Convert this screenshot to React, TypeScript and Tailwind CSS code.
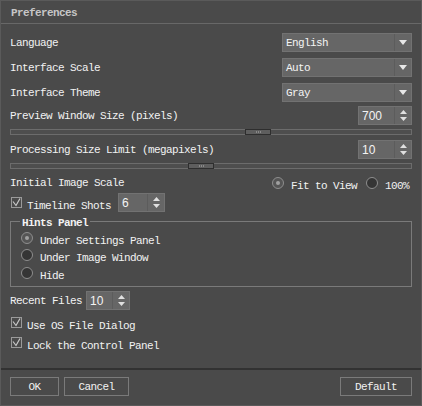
import React from "react";

const F = "font-['Liberation_Mono',monospace] text-[11px] leading-[14px] tracking-[-0.6px]";

function DownTri() {
  return (
    <svg width="8" height="5" viewBox="0 0 8 5">
      <path d="M0 0 L8 0 L4 5 Z" fill="#e8e8e8" />
    </svg>
  );
}

function Dropdown({ value }: { value: string }) {
  return (
    <div className="flex h-[19px] w-[130px] bg-[#666666] border border-[#727272]">
      <div className={`flex-1 flex items-center pl-[3px] text-[#f4f4f4] ${F}`}>{value}</div>
      <div className="w-[17px] border-l border-[#5c5c5c] flex items-center justify-center">
        <DownTri />
      </div>
    </div>
  );
}

function SpinArrows() {
  return (
    <svg width="7" height="11" viewBox="0 0 7 11">
      <path d="M0 4 L7 4 L3.5 0 Z" fill="#e0e0e0" />
      <path d="M0 7 L7 7 L3.5 11 Z" fill="#e0e0e0" />
    </svg>
  );
}

function Spin({ value, w }: { value: string; w: number }) {
  return (
    <div className="flex h-[19px] bg-[#666666] border border-[#727272]" style={{ width: w }}>
      <div className="flex-1 flex items-center pl-[3px] text-[#f4f4f4] font-['Liberation_Sans',sans-serif] text-[12px]">
        {value}
      </div>
      <div className="w-[17px] border-l border-[#5c5c5c] flex items-center justify-center">
        <SpinArrows />
      </div>
    </div>
  );
}

function Slider({ pos }: { pos: number }) {
  return (
    <div className="relative h-[6px] border border-[#6c6c6c] bg-[#4e4e4e]">
      <div
        className="absolute top-[-1px] h-[6px] w-[26px] border border-[#2e2e2e] bg-[#5e5e5e] flex items-center justify-center gap-[1px]"
        style={{ left: pos }}
      >
        <div className="w-px h-[2px] bg-[#8a8a8a]" />
        <div className="w-px h-[2px] bg-[#8a8a8a]" />
        <div className="w-px h-[2px] bg-[#8a8a8a]" />
      </div>
    </div>
  );
}

function Radio({ checked }: { checked?: boolean }) {
  return (
    <div
      className={`w-[12px] h-[12px] shrink-0 rounded-full border border-[#8e8e8e] flex items-center justify-center ${
        checked ? "bg-[#555555]" : "bg-[#353535]"
      }`}
    >
      {checked && <div className="w-[4px] h-[4px] rounded-full bg-[#a0a0a0]" />}
    </div>
  );
}

function Check() {
  return (
    <div className="w-[11px] h-[11px] shrink-0 border border-[#9a9a9a] flex items-center justify-center">
      <svg width="9" height="9" viewBox="0 0 9 9">
        <path d="M1 3.5 L4 7.5 L8 0.5" stroke="#c8c8c8" strokeWidth="1.2" fill="none" />
      </svg>
    </div>
  );
}

function Label({ children, bold }: { children: React.ReactNode; bold?: boolean }) {
  return <span className={`text-[#f2f2f2] ${F} ${bold ? "font-bold" : ""}`}>{children}</span>;
}

export default function App() {
  return (
    <div className="w-[422px] h-[406px] bg-[#4a4a4a] border border-[#5a5a5a] flex flex-col overflow-hidden">
      <div className="h-[23px] pt-[2px] flex items-center pl-[10px] border-b border-[#686868]">
        <span className={`text-[#c6c6c6] font-bold ${F}`}>Preferences</span>
      </div>
      <div className="flex flex-col px-[9px]">
        <div className="mt-[9px] h-[19px] flex items-center justify-between">
          <Label>Language</Label>
          <Dropdown value="English" />
        </div>
        <div className="mt-[6px] h-[19px] flex items-center justify-between">
          <Label>Interface Scale</Label>
          <Dropdown value="Auto" />
        </div>
        <div className="mt-[6px] h-[19px] flex items-center justify-between">
          <Label>Interface Theme</Label>
          <Dropdown value="Gray" />
        </div>
        <div className="mt-[4px] h-[19px] flex items-center justify-between">
          <Label>Preview Window Size (pixels)</Label>
          <Spin value="700" w={54} />
        </div>
        <div className="mt-[4px]">
          <Slider pos={234} />
        </div>
        <div className="mt-[5px] h-[19px] flex items-center justify-between">
          <Label>Processing Size Limit (megapixels)</Label>
          <Spin value="10" w={54} />
        </div>
        <div className="mt-[4px]">
          <Slider pos={177} />
        </div>
        <div className="mt-[5px] h-[18px] flex items-center justify-between">
          <Label>Initial Image Scale</Label>
          <div className="flex items-center pr-[3px]">
            <Radio checked />
            <span className="ml-[7px]">
              <Label>Fit to View</Label>
            </span>
            <span className="ml-[9px]">
              <Radio />
            </span>
            <span className="ml-[7px]">
              <Label>100%</Label>
            </span>
          </div>
        </div>
        <div className="mt-[1px] h-[19px] flex items-center">
          <div className="ml-[1px]">
            <Check />
          </div>
          <span className="ml-[5px]">
            <Label>Timeline Shots</Label>
          </span>
          <div className="ml-[7px]">
            <Spin value="6" w={47} />
          </div>
        </div>
        <div className="relative mt-[9px] h-[66px] border border-[#7a7a7a] pt-[7px] pl-[10px] flex flex-col">
          <div className="absolute left-[9px] top-[-6px] px-[2px] bg-[#4a4a4a] flex">
            <Label bold>Hints Panel</Label>
          </div>
          {["Under Settings Panel", "Under Image Window", "Hide"].map((t, i) => (
            <div key={t} className="h-[17.5px] flex items-center">
              <Radio checked={i === 0} />
              <span className="ml-[7px]">
                <Label>{t}</Label>
              </span>
            </div>
          ))}
        </div>
        <div className="mt-[4px] h-[19px] flex items-center">
          <Label>Recent Files</Label>
          <div className="ml-[4px]">
            <Spin value="10" w={44} />
          </div>
        </div>
        <div className="mt-[4px] h-[17px] flex items-center">
          <div className="ml-[1px]">
            <Check />
          </div>
          <span className="ml-[5px]">
            <Label>Use OS File Dialog</Label>
          </span>
        </div>
        <div className="mt-[3px] h-[17px] flex items-center">
          <div className="ml-[1px]">
            <Check />
          </div>
          <span className="ml-[5px]">
            <Label>Lock the Control Panel</Label>
          </span>
        </div>
      </div>
      <div className="mt-[17px] border-t-2 border-[#323232]" />
      <div className="mt-[7px] px-[9px] flex items-center">
        <button className="w-[49px] h-[19px] border border-[#7a7a7a] flex items-center justify-center">
          <Label>OK</Label>
        </button>
        <button className="ml-[5px] w-[65px] h-[19px] border border-[#7a7a7a] flex items-center justify-center">
          <Label>Cancel</Label>
        </button>
        <div className="flex-1" />
        <button className="w-[72px] h-[19px] border border-[#7a7a7a] flex items-center justify-center">
          <Label>Default</Label>
        </button>
      </div>
    </div>
  );
}
